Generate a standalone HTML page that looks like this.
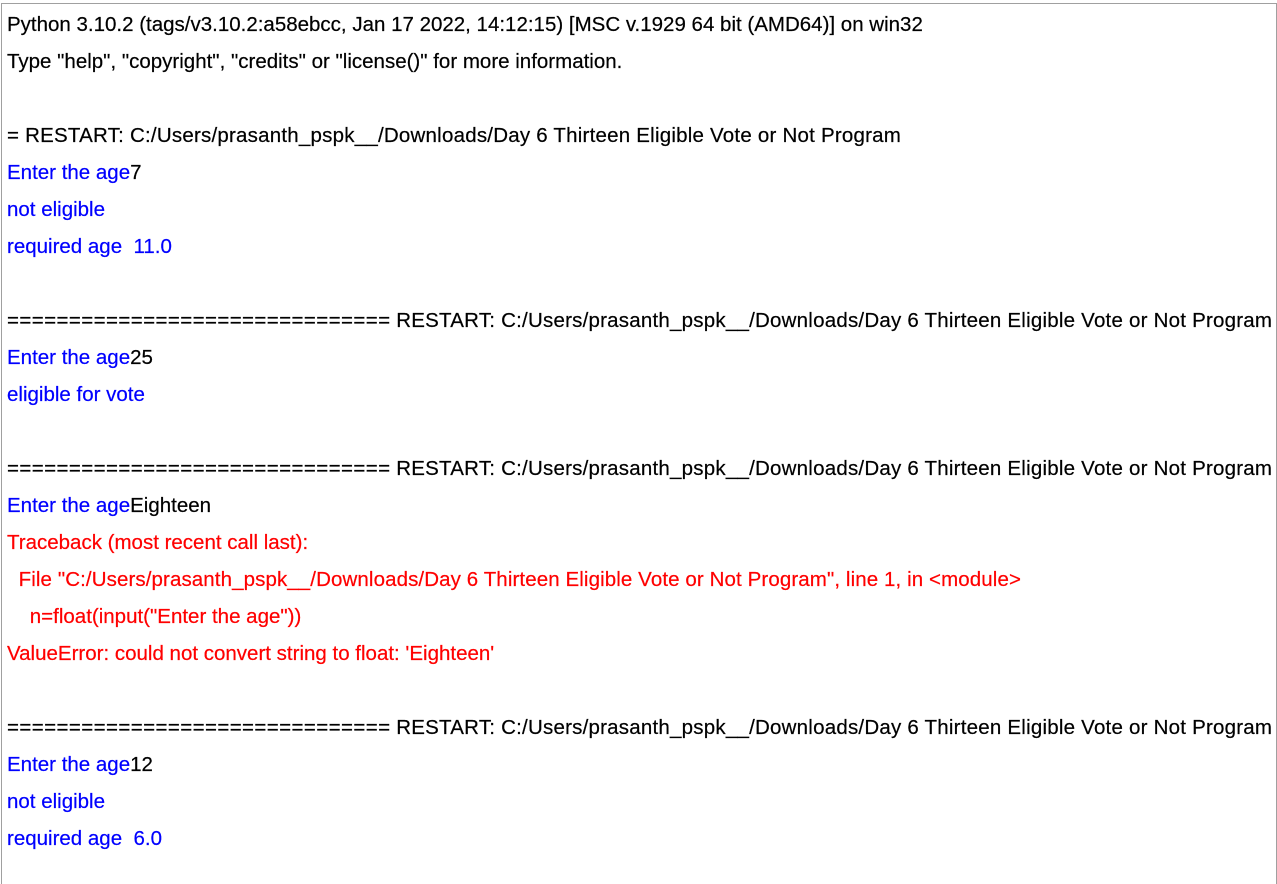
<!DOCTYPE html>
<html><head><meta charset="utf-8"><style>
body{margin:0;width:1277px;height:872px;background:#fff;overflow:hidden;position:relative;font-family:"Liberation Sans",sans-serif;}
#frame{position:absolute;left:1px;top:3px;width:1274px;height:880px;border:1px solid #a0a0a0;border-bottom:none;}
.l{position:absolute;left:7px;height:37px;line-height:37px;font-size:20.5px;white-space:nowrap;letter-spacing:0;color:#000;-webkit-text-stroke:0.2px}
.b{color:#0000ff}.r{color:#ff0000}.k{color:#000}
.eq{letter-spacing:0.4px}.rs{letter-spacing:0.22px}.tb{letter-spacing:0.1px}
</style></head><body><div id="frame"></div>
<div class="l" style="top:6px">Python 3.10.2 (tags/v3.10.2:a58ebcc, Jan 17 2022, 14:12:15) [MSC v.1929 64 bit (AMD64)] on win32</div>
<div class="l" style="top:43px">Type "help", "copyright", "credits" or "license()" for more information.</div>
<div class="l rs" style="top:117px">= RESTART: C:/Users/prasanth_pspk__/Downloads/Day 6 Thirteen Eligible Vote or Not Program</div>
<div class="l" style="top:154px"><span class="b">Enter the age</span>7</div>
<div class="l b" style="top:191px">not eligible</div>
<div class="l b" style="top:228px">required age &nbsp;11.0</div>
<div class="l" style="top:302px"><span class="eq">===============================</span> <span class="rs">RESTART: C:/Users/prasanth_pspk__/Downloads/Day 6 Thirteen Eligible Vote or Not Program</span></div>
<div class="l" style="top:339px"><span class="b">Enter the age</span>25</div>
<div class="l b" style="top:376px">eligible for vote</div>
<div class="l" style="top:450px"><span class="eq">===============================</span> <span class="rs">RESTART: C:/Users/prasanth_pspk__/Downloads/Day 6 Thirteen Eligible Vote or Not Program</span></div>
<div class="l" style="top:487px"><span class="b">Enter the age</span>Eighteen</div>
<div class="l r" style="top:524px">Traceback (most recent call last):</div>
<div class="l r tb" style="top:561px">&nbsp; File "C:/Users/prasanth_pspk__/Downloads/Day 6 Thirteen Eligible Vote or Not Program", line 1, in &lt;module&gt;</div>
<div class="l r" style="top:598px">&nbsp;&nbsp;&nbsp; n=float(input("Enter the age"))</div>
<div class="l r" style="top:635px">ValueError: could not convert string to float: 'Eighteen'</div>
<div class="l" style="top:709px"><span class="eq">===============================</span> <span class="rs">RESTART: C:/Users/prasanth_pspk__/Downloads/Day 6 Thirteen Eligible Vote or Not Program</span></div>
<div class="l" style="top:746px"><span class="b">Enter the age</span>12</div>
<div class="l b" style="top:783px">not eligible</div>
<div class="l b" style="top:820px">required age &nbsp;6.0</div>
</body></html>
